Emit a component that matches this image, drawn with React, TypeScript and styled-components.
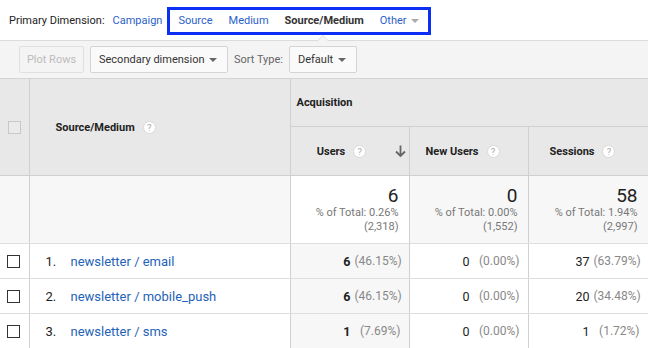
import styled, { createGlobalStyle } from "styled-components";

const GlobalStyle = createGlobalStyle`
  html, body {
    margin: 0;
    padding: 0;
    background: #fff;
    font-family: Roboto, "Liberation Sans", Arial, sans-serif;
    color: #222;
  }
`;

const Page = styled.div`
  width: 648px;
  height: 348px;
  overflow: hidden;
  font-size: 11px;
`;

const DimensionBar = styled.div`
  display: flex;
  align-items: center;
  height: 40px;
  padding-left: 9px;
  box-sizing: border-box;
  padding-top: 8px;
  padding-bottom: 7px;
`;

const Label = styled.span`
  color: #222;
  margin-right: 8px;
`;

const DimLink = styled.span<{ $active?: boolean }>`
  color: ${(p) => (p.$active ? "#333" : "#2a62c9")};
  font-weight: ${(p) => (p.$active ? 700 : 400)};
  display: inline-flex;
  align-items: center;
`;

const Highlight = styled.div`
  display: flex;
  align-items: center;
  gap: 16px;
  margin-left: 5px;
  height: 28px;
  padding: 0 9px 0 8px;
  box-sizing: border-box;
  border: 3px solid #0b2ff3;
`;

const SmallCaret = styled.span<{ $color?: string }>`
  display: inline-block;
  width: 0;
  height: 0;
  margin-left: 4px;
  border-left: 4px solid transparent;
  border-right: 4px solid transparent;
  border-top: 4px solid ${(p) => p.$color || "#aaa"};
`;

const Toolbar = styled.div`
  position: relative;
  display: flex;
  align-items: center;
  gap: 6px;
  height: 38px;
  padding: 0 0 0 19px;
  box-sizing: border-box;
  background: #f4f4f4;
  border-top: 1px solid #dcdcdc;

  &::before,
  &::after {
    content: "";
    position: absolute;
    left: 318px;
    width: 0;
    height: 0;
    border-left: 5px solid transparent;
    border-right: 5px solid transparent;
  }
  &::before {
    top: -6px;
    border-bottom: 5px solid #dcdcdc;
  }
  &::after {
    top: -5px;
    border-bottom: 5px solid #f4f4f4;
  }
`;

const ToolButton = styled.div<{ $disabled?: boolean; $w: number }>`
  display: flex;
  align-items: center;
  justify-content: ${(p) => (p.$disabled ? "center" : "space-between")};
  width: ${(p) => p.$w}px;
  height: 27px;
  box-sizing: border-box;
  white-space: nowrap;
  padding: 0 ${(p) => (p.$disabled ? 0 : 10)}px 0 ${(p) => (p.$disabled ? 0 : 8)}px;
  border: 1px solid ${(p) => (p.$disabled ? "#e0e0e0" : "#d4d4d4")};
  border-radius: 2px;
  background: ${(p) => (p.$disabled ? "#f4f4f4" : "#fafafa")};
  color: ${(p) => (p.$disabled ? "#bcbcbc" : "#333")};
`;

const SortLabel = styled.span`
  color: #666;
`;

const Table = styled.table`
  width: 648px;
  border-collapse: collapse;
  table-layout: fixed;
  border-top: 1px solid #d4d4d4;
`;

const HeadCell = styled.th`
  background: #e8e8e8;
  border: 1px solid #d0d0d0;
  border-top: none;
  font-weight: 700;
  font-size: 11px;
  color: #222;
  text-align: left;
  padding: 0;
  &:first-child {
    border-left: none;
  }
`;

const HeadInner = styled.div<{ $justify?: string; $pl?: number; $pr?: number }>`
  position: relative;
  display: flex;
  align-items: center;
  justify-content: ${(p) => p.$justify || "flex-start"};
  padding-left: ${(p) => p.$pl || 0}px;
  padding-right: ${(p) => p.$pr || 0}px;
  height: 100%;
`;

const Help = styled.span`
  display: inline-flex;
  align-items: center;
  justify-content: center;
  width: 13px;
  height: 13px;
  margin-left: 8px;
  border-radius: 50%;
  background: #fff;
  border: 1px solid #dadada;
  box-sizing: border-box;
  color: #aaa;
  font-size: 9.5px;
  font-weight: 400;
`;

const SortArrow = styled.span`
  position: absolute;
  right: 3px;
  top: 50%;
  transform: translateY(-50%);
  display: flex;
`;

const Cell = styled.td<{ $bg?: string }>`
  background: ${(p) => p.$bg || "#fff"};
  border-left: 1px solid #d0d0d0;
  border-right: 1px solid #d0d0d0;
  border-bottom: 1px solid #dedede;
  padding: 0;
  &:first-child {
    border-left: none;
  }
`;

const Check = styled.span<{ $header?: boolean }>`
  display: block;
  width: 13px;
  height: 13px;
  box-sizing: border-box;
  margin-left: ${(p) => (p.$header ? 8 : 7)}px;
  border: ${(p) => (p.$header ? "1px solid #c8c8c8" : "1.5px solid #333")};
  background: ${(p) => (p.$header ? "#ebebeb" : "#fff")};
`;

const TotalBlock = styled.div`
  padding-right: 10px;
  text-align: right;
  color: #777;
  font-size: 11px;
  line-height: 14px;
`;

const BigNum = styled.div`
  font-size: 19px;
  line-height: 20px;
  color: #222;
`;

const RowName = styled.div`
  display: flex;
  align-items: center;
  font-size: 13px;
`;

const Index = styled.span`
  width: 25px;
  padding-left: 16px;
  color: #222;
`;

const RowLink = styled.span`
  color: #1f63b8;
`;

const Metric = styled.div`
  display: flex;
  justify-content: flex-end;
  align-items: center;
  padding-right: 8px;
  font-size: 12.5px;
`;

const Value = styled.span<{ $bold?: boolean }>`
  font-weight: ${(p) => (p.$bold ? 700 : 400)};
  color: #222;
`;

const Pct = styled.span`
  width: 46px;
  margin-left: 4px;
  text-align: right;
  color: #888;
  font-size: 12px;
`;

type Row = {
  name: string;
  users: [string, string];
  newUsers: [string, string];
  sessions: [string, string];
};

const rows: Row[] = [
  { name: "newsletter / email", users: ["6", "(46.15%)"], newUsers: ["0", "(0.00%)"], sessions: ["37", "(63.79%)"] },
  { name: "newsletter / mobile_push", users: ["6", "(46.15%)"], newUsers: ["0", "(0.00%)"], sessions: ["20", "(34.48%)"] },
  { name: "newsletter / sms", users: ["1", "(7.69%)"], newUsers: ["0", "(0.00%)"], sessions: ["1", "(1.72%)"] },
];

const totals = [
  { big: "6", pct: "0.26%", all: "(2,318)", bg: "#fff" },
  { big: "0", pct: "0.00%", all: "(1,552)", bg: "#f7f7f7" },
  { big: "58", pct: "1.94%", all: "(2,997)", bg: "#f7f7f7" },
];

const ArrowDown = () => (
  <svg width="11" height="13" viewBox="0 0 11 13">
    <path d="M5.5 1v10.5M1 7l4.5 4.5L10 7" stroke="#666" strokeWidth="1.8" fill="none" />
  </svg>
);

const App = () => {
  return (
    <Page>
      <GlobalStyle />
      <DimensionBar>
        <Label>Primary Dimension:</Label>
        <DimLink>Campaign</DimLink>
        <Highlight>
          <DimLink>Source</DimLink>
          <DimLink>Medium</DimLink>
          <DimLink $active>Source/Medium</DimLink>
          <DimLink>
            Other
            <SmallCaret />
          </DimLink>
        </Highlight>
      </DimensionBar>
      <Toolbar>
        <ToolButton $disabled $w={65}>Plot Rows</ToolButton>
        <ToolButton $w={138}>
          Secondary dimension
          <SmallCaret $color="#666" />
        </ToolButton>
        <SortLabel>Sort Type:</SortLabel>
        <ToolButton $w={68}>
          Default
          <SmallCaret $color="#666" />
        </ToolButton>
      </Toolbar>
      <Table>
        <colgroup>
          <col style={{ width: 29 }} />
          <col style={{ width: 261 }} />
          <col style={{ width: 119 }} />
          <col style={{ width: 119 }} />
          <col style={{ width: 120 }} />
        </colgroup>
        <thead>
          <tr style={{ height: 48 }}>
            <HeadCell rowSpan={2}>
              <Check $header />
            </HeadCell>
            <HeadCell rowSpan={2}>
              <HeadInner $pl={26}>
                Source/Medium
                <Help>?</Help>
              </HeadInner>
            </HeadCell>
            <HeadCell colSpan={3}>
              <HeadInner $pl={6}>Acquisition</HeadInner>
            </HeadCell>
          </tr>
          <tr style={{ height: 49 }}>
            <HeadCell>
              <HeadInner $justify="center" $pr={16}>
                Users
                <Help>?</Help>
                <SortArrow>
                  <ArrowDown />
                </SortArrow>
              </HeadInner>
            </HeadCell>
            <HeadCell>
              <HeadInner $justify="center" $pr={12}>
                New Users
                <Help>?</Help>
              </HeadInner>
            </HeadCell>
            <HeadCell>
              <HeadInner $justify="center" $pr={11}>
                Sessions
                <Help>?</Help>
              </HeadInner>
            </HeadCell>
          </tr>
        </thead>
        <tbody>
          <tr style={{ height: 68 }}>
            <Cell $bg="#f7f7f7" />
            <Cell $bg="#f7f7f7" />
            {totals.map((t) => (
              <Cell key={t.all} $bg={t.bg}>
                <TotalBlock>
                  <BigNum>{t.big}</BigNum>
                  <div>% of Total: {t.pct}</div>
                  <div>{t.all}</div>
                </TotalBlock>
              </Cell>
            ))}
          </tr>
          {rows.map((r, i) => (
            <tr key={r.name} style={{ height: 35 }}>
              <Cell>
                <Check />
              </Cell>
              <Cell>
                <RowName>
                  <Index>{i + 1}.</Index>
                  <RowLink>{r.name}</RowLink>
                </RowName>
              </Cell>
              <Cell $bg="#f7f7f7">
                <Metric>
                  <Value $bold>{r.users[0]}</Value>
                  <Pct>{r.users[1]}</Pct>
                </Metric>
              </Cell>
              <Cell>
                <Metric>
                  <Value>{r.newUsers[0]}</Value>
                  <Pct>{r.newUsers[1]}</Pct>
                </Metric>
              </Cell>
              <Cell>
                <Metric>
                  <Value>{r.sessions[0]}</Value>
                  <Pct>{r.sessions[1]}</Pct>
                </Metric>
              </Cell>
            </tr>
          ))}
        </tbody>
      </Table>
    </Page>
  );
};

export default App;
